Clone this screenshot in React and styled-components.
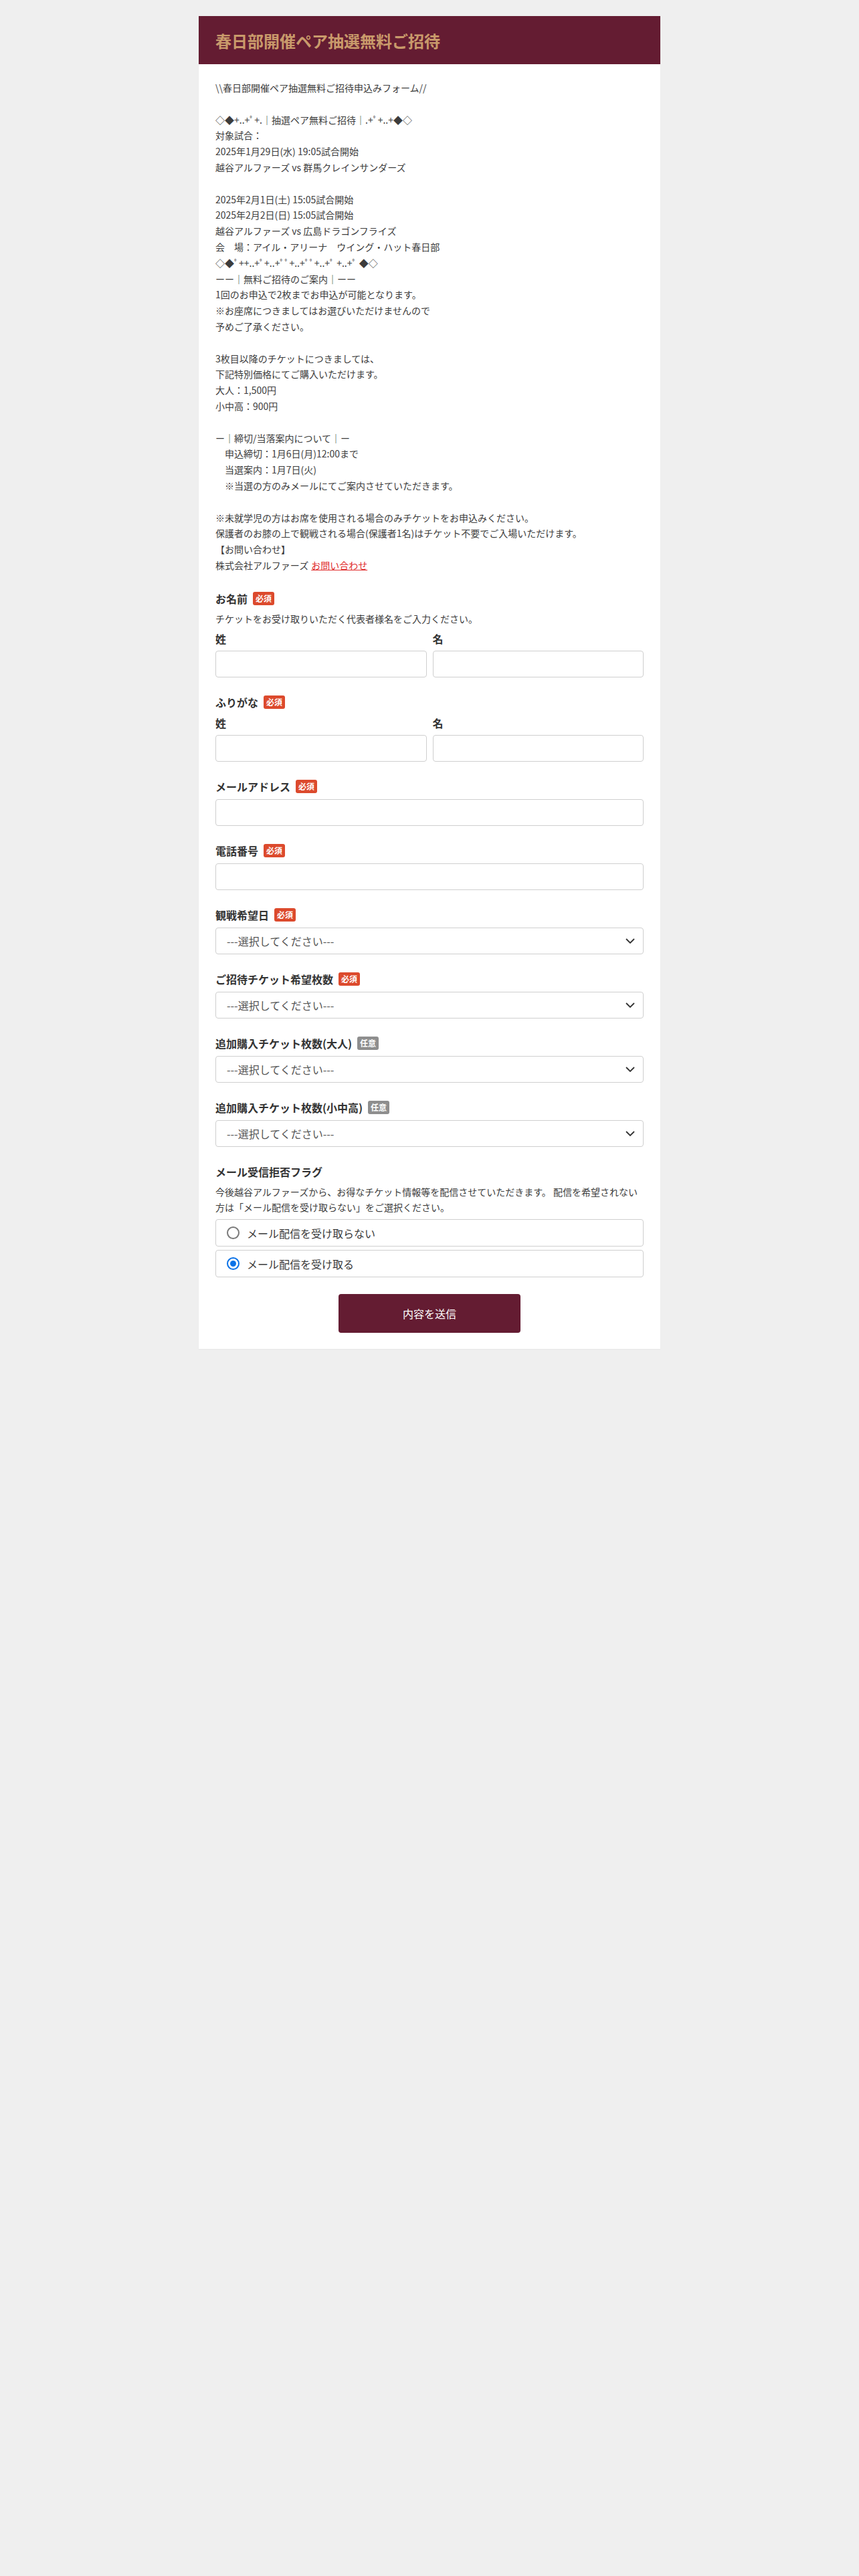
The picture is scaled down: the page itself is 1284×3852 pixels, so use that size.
import React from "react";
import styled, { createGlobalStyle } from "styled-components";

const GlobalStyle = createGlobalStyle`
  body {
    margin: 0;
    background: #efefef;
    font-family: "Noto Sans CJK JP", "Noto Sans", sans-serif;
    color: #3a3a3a;
  }
`;

const Page = styled.div`
  padding: 24px 0 40px;
`;

const Card = styled.div`
  width: 690px;
  margin: 0 auto;
  background: #fff;
  box-shadow: 0 1px 2px rgba(0, 0, 0, 0.04);
`;

const Header = styled.header`
  height: 72px;
  display: flex;
  align-items: center;
  padding: 0 25px;
  background: #641c32;
`;

const Title = styled.h1`
  margin: 0;
  font-size: 24px;
  font-weight: 700;
  color: #c99a6b;
  letter-spacing: 0;
`;

const Body = styled.div`
  padding: 24px 25px 24px;
`;

const Intro = styled.p`
  margin: 0 0 25px;
  font-size: 14px;
  line-height: 1.7;
  white-space: pre-wrap;
  color: #3c3c3c;
`;

const Link = styled.a`
  margin-left: 4px;
  color: #e02b2b;
  text-decoration: underline;
`;

const Field = styled.div`
  margin-bottom: 25px;
`;

const Label = styled.div`
  display: flex;
  align-items: center;
  gap: 8px;
  height: 24px;
  margin-bottom: 7px;
  font-size: 16px;
  font-weight: 700;
  color: #333;
`;

const Badge = styled.span`
  display: inline-block;
  height: 20px;
  padding: 0 4px;
  border-radius: 3px;
  font-size: 12px;
  line-height: 20px;
  font-weight: 700;
  color: #fff;
  background: ${(p) => (p.$optional ? "#8e8e8e" : "#dc4a2d")};
`;

const Note = styled.div`
  margin-bottom: 5px;
  font-size: 14px;
  line-height: 1.7;
  color: #3c3c3c;
`;

const Columns = styled.div`
  display: grid;
  grid-template-columns: 1fr 1fr;
  gap: 9px;
`;

const SubLabel = styled.div`
  height: 24px;
  margin-bottom: 6px;
  font-size: 16px;
  line-height: 24px;
  font-weight: 700;
  color: #333;
`;

const Input = styled.input`
  display: block;
  width: 100%;
  height: 40px;
  box-sizing: border-box;
  border: 1px solid #cfcfcf;
  border-radius: 4px;
  padding: 0 12px;
  font-family: inherit;
  font-size: 16px;
  background: #fff;
`;

const SelectWrap = styled.div`
  position: relative;
`;

const Select = styled.select`
  display: block;
  width: 100%;
  height: 40px;
  box-sizing: border-box;
  appearance: none;
  border: 1px solid #cfcfcf;
  border-radius: 4px;
  padding: 0 40px 0 16px;
  font-family: inherit;
  font-size: 16px;
  color: #555;
  background: #fff;
`;

const Chevron = styled.svg`
  position: absolute;
  right: 13px;
  top: 50%;
  width: 14px;
  height: 8px;
  margin-top: -4px;
  pointer-events: none;
`;

const Options = styled.div`
  display: flex;
  flex-direction: column;
  gap: 5px;
`;

const Option = styled.label`
  display: flex;
  align-items: center;
  gap: 11px;
  height: 41px;
  box-sizing: border-box;
  padding: 0 16px;
  border: 1px solid #cfcfcf;
  border-radius: 4px;
  font-size: 16px;
  color: #3a3a3a;
`;

const Radio = styled.span`
  width: 19px;
  height: 19px;
  box-sizing: border-box;
  border-radius: 50%;
  border: 2px solid ${(p) => (p.$checked ? "#0b72e7" : "#7a7a7a")};
  display: flex;
  align-items: center;
  justify-content: center;

  &::after {
    content: "";
    width: 9px;
    height: 9px;
    border-radius: 50%;
    background: ${(p) => (p.$checked ? "#0b72e7" : "transparent")};
  }
`;

const Submit = styled.button`
  display: block;
  width: 272px;
  height: 58px;
  margin: 0 auto;
  border: none;
  border-radius: 4px;
  background: #641c32;
  color: #fff;
  font-family: inherit;
  font-size: 16px;
`;

const introText = `\\\\春日部開催ペア抽選無料ご招待申込みフォーム//

◇◆+..+ﾟ+.｜抽選ペア無料ご招待｜.+ﾟ+..+◆◇
対象試合：
2025年1月29日(水) 19:05試合開始
越谷アルファーズ vs 群馬クレインサンダーズ

2025年2月1日(土) 15:05試合開始
2025年2月2日(日) 15:05試合開始
越谷アルファーズ vs 広島ドラゴンフライズ
会　場：アイル・アリーナ　ウイング・ハット春日部
◇◆ﾟ++..+ﾟ+..+ﾟﾟ+..+ﾟﾟ+..+ﾟ +..+ﾟ ◆◇
ーー｜無料ご招待のご案内｜ーー
1回のお申込で2枚までお申込が可能となります。
※お座席につきましてはお選びいただけませんので
予めご了承ください。

3枚目以降のチケットにつきましては、
下記特別価格にてご購入いただけます。
大人：1,500円
小中高：900円

ー｜締切/当落案内について｜ー
　申込締切：1月6日(月)12:00まで
　当選案内：1月7日(火)
　※当選の方のみメールにてご案内させていただきます。

※未就学児の方はお席を使用される場合のみチケットをお申込みください。
保護者のお膝の上で観戦される場合(保護者1名)はチケット不要でご入場いただけます。
【お問い合わせ】
株式会社アルファーズ`;

const selects = [
  { label: "観戦希望日", optional: false },
  { label: "ご招待チケット希望枚数", optional: false },
  { label: "追加購入チケット枚数(大人)", optional: true },
  { label: "追加購入チケット枚数(小中高)", optional: true },
];

function FieldLabel({ children, optional, badge = true }) {
  return (
    <Label>
      {children}
      {badge && <Badge $optional={optional}>{optional ? "任意" : "必須"}</Badge>}
    </Label>
  );
}

function NamePair() {
  return (
    <Columns>
      <div>
        <SubLabel>姓</SubLabel>
        <Input type="text" />
      </div>
      <div>
        <SubLabel>名</SubLabel>
        <Input type="text" />
      </div>
    </Columns>
  );
}

export default function App() {
  return (
    <>
      <GlobalStyle />
      <Page>
        <Card>
          <Header>
            <Title>春日部開催ペア抽選無料ご招待</Title>
          </Header>
          <Body>
            <Intro>
              {introText}
              <Link href="#">お問い合わせ</Link>
            </Intro>

            <Field>
              <FieldLabel>お名前</FieldLabel>
              <Note>チケットをお受け取りいただく代表者様名をご入力ください。</Note>
              <NamePair />
            </Field>

            <Field>
              <FieldLabel>ふりがな</FieldLabel>
              <NamePair />
            </Field>

            <Field>
              <FieldLabel>メールアドレス</FieldLabel>
              <Input type="email" />
            </Field>

            <Field>
              <FieldLabel>電話番号</FieldLabel>
              <Input type="tel" />
            </Field>

            {selects.map((s) => (
              <Field key={s.label}>
                <FieldLabel optional={s.optional}>{s.label}</FieldLabel>
                <SelectWrap>
                  <Select defaultValue="">
                    <option value="">---選択してください---</option>
                  </Select>
                  <Chevron viewBox="0 0 14 8">
                    <path d="M1 1l6 6 6-6" fill="none" stroke="#333" strokeWidth="1.8" />
                  </Chevron>
                </SelectWrap>
              </Field>
            ))}

            <Field>
              <FieldLabel badge={false}>メール受信拒否フラグ</FieldLabel>
              <Note>
                今後越谷アルファーズから、お得なチケット情報等を配信させていただきます。 配信を希望されない方は「メール配信を受け取らない」をご選択ください。
              </Note>
              <Options>
                <Option>
                  <Radio />
                  メール配信を受け取らない
                </Option>
                <Option>
                  <Radio $checked />
                  メール配信を受け取る
                </Option>
              </Options>
            </Field>

            <Submit type="button">内容を送信</Submit>
          </Body>
        </Card>
      </Page>
    </>
  );
}
